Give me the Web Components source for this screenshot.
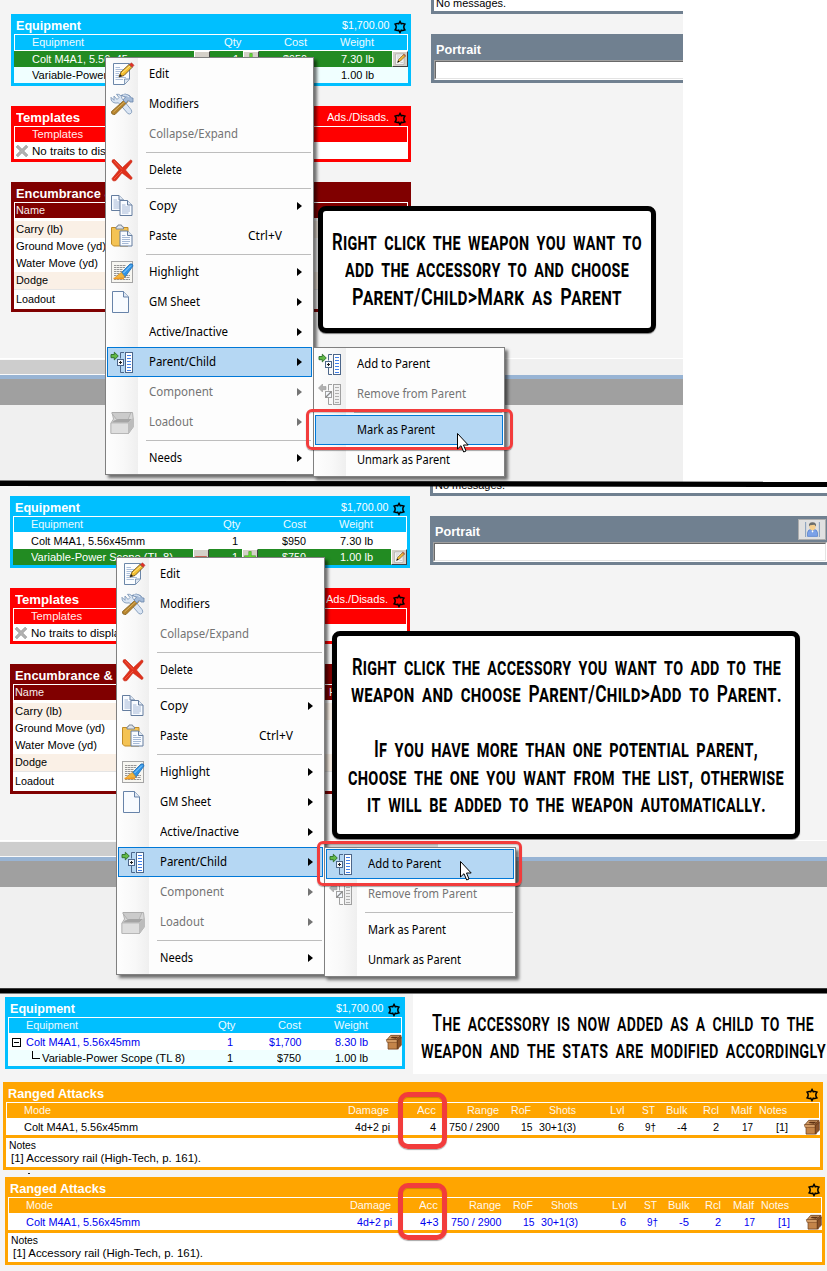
<!DOCTYPE html>
<html lang="en">
<head>
<meta charset="utf-8">
<title>Adding accessories to weapons</title>
<style>
html,body{margin:0;padding:0}
body{width:827px;height:1271px;position:relative;overflow:hidden;background:#fff;font:11px/16px "Liberation Sans",Arial,sans-serif;color:#000}
</style>
</head>
<body>
<guide-page></guide-page>

<script>
const PAGE='<path d="M3.5 1.5H19.5V17L14.500 22.500H3.5Z" fill="#fbfdff" stroke="#6b86a8"/><path d="M14.500 22V17H19" fill="#dfe8f2" stroke="#6b86a8" stroke-width=".8"/>';
const DOC='<path d="M.5.5H8L12.500 5V15.500H.5Z" fill="#f8fbff" stroke="#647d9f"/><path d="M8 .5V5H12.500" fill="#e1e9f4" stroke="#647d9f"/><path d="M2.500 5H6M2.500 7H10.500M2.500 9H10.500M2.500 11H10.500M2.500 13H9" stroke="#8fa8cc" stroke-width=".8"/>';
const LINK=(off)=>{const n=off?'#a0a0a0':'#4c668a',l=off?'#b0b0b0':'#3f80ec';
return `<path d="M14 2.500H10.500V8.500M10.500 16V22.500H14" fill="none" stroke="${n}"/><rect x="15.500" y="2.500" width="7" height="20" fill="${off?'#f0f0f0':'#fff'}" stroke="${n}"/><path d="M17 5.500H21M17 8.500H21M17 11.500H21M17 14.500H21M17 17.500H21M17 20.500H21" stroke="${l}"/><rect x="7.500" y="9.500" width="6" height="6" fill="#f4f8fd" stroke="${n}"/>`+
(off?'<path d="M7.500 15.500 13.500 9.500" stroke="#888" stroke-width="1.200"/><path d="M.5 6 4.500 2V4.500H8V7.700H4.500V10Z" fill="#b0b0b0" stroke="#999" stroke-width=".6"/>':'<path d="M10.500 11V14M9 12.500H12" stroke="#222"/><path d="M8.300 6 4.300 2.200V4.500H1V7.700H4.300V9.900Z" fill="#62ba45" stroke="#2a6c28" stroke-width=".9"/>')};
const ICONS={
edit:PAGE+'<path d="M5.500 5.500H10M5.500 7.500H13M5.500 9.500H11M5.500 11.500H9M5.500 13.500H9M5.500 15.500H16M5.500 17.500H13" stroke="#a3b8d6" stroke-width=".9"/><path d="M9 15 11 10 19 2.500 22 5.500 14 13.500Z" fill="#f4bf31" stroke="#6d5420" stroke-width=".9"/><path d="M9 15 10 12 12 14Z" fill="#222"/><path d="M12 11 20 4" stroke="#ffe68a"/><path d="M19.500 2.500 21.500.8 24 3.300 22.300 5.300Z" fill="#e33127" stroke="#9b2a20" stroke-width=".5"/>',
tools:'<path d="M4 4 7 7.500 9 5.500 6.500 2.300Q11 1.800 12 6.500L21 17.500Q23 21 19.500 22Q17.500 22 16.500 20L8.500 10.800Q3 12 1.200 8L1 5.300 4 8.300Z" fill="#dbe6f4" stroke="#7f98b8" stroke-width=".9"/><path d="M1.500 19.500 15.500 7 18 9.500 5 22.500Q1 23 1.500 19.500Z" fill="#b6832c" stroke="#80601f" stroke-width=".8"/><path d="M3.500 20 15.500 9" stroke="#dbb363"/><path d="M11 3.500Q15 .5 19.500 3.500L21.500 6 23 6 23 10 20 10 18.500 8 16 11 13 8 15.500 5Z" fill="#a5bbd8" stroke="#6b86ab" stroke-width=".8"/><path d="M13 3Q17 2.500 19 5" stroke="#e7f0fb" fill="none"/>',
del:'<path d="M2 4Q1.500 1 4.500 1.500L12.500 9.500 20.500 2Q22.500 2 22 4L15.500 12 22 19.500Q22.500 21.500 20.500 21.500L12 15 6 22.500Q2 24 2 20.500L9 12Z" fill="#e0301b" stroke="#c42b19" stroke-width=".6"/><path d="M4 3 12 11.500M4 21 12 13" stroke="#ee5a44" fill="none"/>',
copy:`<g transform="translate(1 1)">${DOC}</g><g transform="translate(9.500 6)">${DOC}</g>`,
paste:`<path d="M1.500 3.500H18V22H3.500L1.500 20Z" fill="#f4c354" stroke="#c08b27"/><path d="M6 5V3Q8 3 8 1H11.500Q11.500 3 13.500 3V5Z" fill="#dfe4ea" stroke="#7d8897"/><g transform="translate(9.500 6.500)">${DOC}</g>`,
highlight:'<rect x="1.500" y="1.500" width="21" height="21" fill="#f7f6f1" stroke="#a5a5a5"/><path d="M4 5.500H16M4 7.500H15M4 9.500H13M4 11.500H12M4 13.500H9M4 15.500H8M16 15.500H20M14 17.500H20M4 19.500H20" stroke="#8a8a8a" stroke-width=".9" stroke-dasharray="2.500 .5"/><path d="M12 12 20 4Q23 3 23 6L15 17 11 16Z" fill="#3195e7" stroke="#246db0" stroke-width=".8"/><path d="M13.500 13 21 5.500" stroke="#9bd4ff"/><path d="M11.500 12.500 15 17 9 18.500 4 18.500 9 14Z" fill="#f5b53b" stroke="#b68231" stroke-width=".6"/><path d="M3.500 18.500H14" stroke="#f39a22" stroke-width="1.500"/>',
page:'<path d="M2.500 1.500H13.500L18.500 7V22.500H2.500Z" fill="#f8fbff" stroke="#6783a9"/><path d="M13.500 1.500V7H18.500" fill="#dfe8f3" stroke="#6783a9"/>',
link:LINK(false),unlink:LINK(true),
boxgray:'<path d="M1 13 3.500 9 2 2.500H12L22.500 2.500 23.300 9V17L18.500 23.500H1Z" fill="#d6d6d6" stroke="#a2a2a2" stroke-width=".8"/><path d="M2 2.500H21L18 9.500 6.500 9.500 2 3.500Z" fill="#cbcbcb" stroke="#a6a6a6" stroke-width=".7"/><path d="M4 10.500 9 9H22L18.500 12.500H2Z" fill="#a5a5a5"/><path d="M1 13H18.500V23.500H1Z" fill="#dedede" stroke="#b0b0b0" stroke-width=".7"/><path d="M18.500 13 23 8V17.500L18.500 23.500Z" fill="#bcbcbc"/>',
box:'<path d="M2 8 8 2H23L23.500 6 19 9V23H3V10.500Z" fill="#8a5228"/><path d="M1 9 7 2H22L16 8Z" fill="#d29a63" stroke="#5f3516" stroke-width="1"/><path d="M6.500 6 9 4H19L15 7Z" fill="#5d3113"/><path d="M3 10H17V22.500H3Z" fill="#c48449" stroke="#6b3d1b" stroke-width="1"/><path d="M17 10 23 5V17L17 22.500Z" fill="#8b5127" stroke="#5f3516" stroke-width="1"/><path d="M.5 8.500H16.500V12.500H1.500Z" fill="#dda46b" stroke="#6b3d1b" stroke-width=".8"/>',
gear:'<path d="M12 2.500 14.200 6.500Q17 5.500 20.500 7 18.500 9.500 18.500 12 18.500 14.500 20.500 17 17 18.500 14.200 17.500L12 21.500 9.800 17.500Q7 18.500 3.500 17 5.500 14.500 5.500 12 5.500 9.500 3.500 7 7 5.500 9.800 6.500Z" fill="none" stroke="#000" stroke-width="2.600"/>',
none:'<path d="M2 5 5 2 12 9 19 2 22 5 15 12 22 19 19 22 12 15 5 22 2 19 9 12Z" fill="#b2b2b2" stroke="#858585"/>',
pencil:'<path d="M3 2H20V23H3Z" fill="#f2f2f2" stroke="#999"/><path d="M6 6H13M6 10H10M13 19H18" stroke="#aaa"/><path d="M7 19 9 13 19 3 23 6 13 16Z" fill="#edb334" stroke="#473c22"/><path d="M7 19 8.500 15 11 17.500Z"/><path d="M18 4 20 1 24 5 22 7Z" fill="#b46b4b"/>',
minus:'<path d="M1 11H23V16H1Z" fill="#f36c55" stroke="#a8281c"/>',
plus:'<path d="M9.500 1H14.500V9.500H23V14.500H14.500V22H9.500V14.500H1V9.500H9.500Z" fill="#65dd32" stroke="#2d8f15"/>',
user:'<path d="M1 0V24M23 0V24" stroke="#7e99ba" stroke-width="1.500"/><path d="M4 23V17Q5 12 9 12L12 15 15 12Q19 12 20 17V23Z" fill="#7ca2e8" stroke="#4773c4"/><circle cx="12" cy="8" r="5" fill="#f6cf8d"/><path d="M6.500 7Q5 1 12 .500Q19 1 17.500 7L15 4.500 8 5Z" fill="#6b6d6b"/><path d="M10 14H14L12 17Z" fill="#fff"/>'
};
function define(name,css,html,after){
  customElements.define(name,class extends HTMLElement{
    connectedCallback(){
      if(this.shadowRoot)return;
      const r=this.attachShadow({mode:'open'});
      const t=document.createElement('template');
      t.innerHTML=`<style>*{box-sizing:border-box}${css}</style>${typeof html==='function'?html(this):html}`;
      r.append(t.content.cloneNode(true));
      if(after)after(this,r);
    }
  });
}
const at=(e,n,d='')=>e.getAttribute(n)??d;

/* Text condensed or expanded to a set width */
define('fit-text',':host{display:inline-block;white-space:pre;text-align:left}span{display:inline-block;transform-origin:0 50%}','<span><slot></slot></span>',(e,r)=>{
  const s=r.querySelector('span'),w=+at(e,'w',0);
  if(!w)return;
  s.style.transform=`scaleX(${w/s.getBoundingClientRect().width})`;
  e.style.width=w+'px';
});
const T=(t,w)=>`<fit-text w="${w}">${t}</fit-text>`;

define('ui-icon',':host{display:block;flex:none}svg{display:block;width:100%;height:100%;overflow:visible}',e=>`<svg viewBox="0 0 24 24">${ICONS[at(e,'name')]}</svg>`);
define('tiny-button',':host{display:block;flex:none;width:16px;height:16px;background:#d4d0c8;border:1px solid;border-color:#fff #404040 #404040 #fff;padding:1px}ui-icon{width:12px;height:12px}',e=>`<ui-icon name="${at(e,'name')}"></ui-icon>`);

/* Coloured panel with title bar, white frame and slotted rows */
define('sheet-panel',`:host{display:block;background:var(--c);padding:3px}
.t{height:17px;display:flex;align-items:center;color:#fff;font-size:12px;font-weight:bold;padding:0 1px 0 2px}
.x{margin-left:auto;margin-right:4px;font-size:11px;font-weight:normal;padding-bottom:2px}
ui-icon{width:14px;height:14px;position:relative;top:1px}.b{background:#fff}`,
e=>`<div class="t">${T(at(e,'title-text'),at(e,'tw'))}<span class="x">${at(e,'total')?T(at(e,'total'),at(e,'totalw')):''}</span>${at(e,'gear')==='no'?'':'<ui-icon name="gear"></ui-icon>'}</div><div class="b"><slot></slot></div>`);

/* One table line, columns passed as a grid template */
define('sheet-row',`:host{display:grid;height:16px;line-height:16px;align-items:center;text-align:right}
:host([head]){background:var(--c);border:1px solid #fff;border-bottom:0;color:#fff;line-height:15px;margin-bottom:1px}
:host([head]) ::slotted(*){opacity:.93}`,'<slot></slot>',(e)=>{e.style.gridTemplateColumns=at(e,'cols')});

const EQ='160px 67px 66px 67px 1fr', EQH='159px 67px 66px 67px 1fr';
define('equipment-panel',`:host{display:block;width:400px;--c:#00bfff}
.n{text-align:left;padding-left:18px;white-space:nowrap}.hn{padding-left:17px}.v{padding-right:2px}
.sel{background:#228b22;color:#fff}.alt{background:#f0ffff}
.q{display:flex;justify-content:space-between;padding-left:20px;padding-right:2px}.co{display:flex;justify-content:space-between;padding-left:2px}
.blue{color:#0000f0}.tree{display:flex;padding-left:18px;text-align:left}.root{display:flex;text-align:left}
.mb{flex:none;width:9px;height:9px;border:1px solid #000;margin:4px 5px 0 4px;position:relative}.mb:after{content:"";position:absolute;left:1px;right:1px;top:3px;height:1px;background:#000}
.elb{flex:none;width:8px;height:8px;border-left:1px solid #000;border-bottom:1px solid #000;margin:1px 2px 0 6px}
fit-text{flex:none}.act{justify-self:end}`,
e=>{
 const m=at(e,'mode');
 const row=(name,w,cost,cw,wt,sel,alt)=>`<sheet-row cols="${EQ}" class="${sel?'sel':alt?'alt':''}"><span class="n">${T(name,w)}</span>${sel?`<span class="q"><tiny-button name="minus"></tiny-button><span>1</span></span><span class="co"><tiny-button name="plus"></tiny-button>${T(cost,cw)}</span>`:`<span class="v">1</span><span>${T(cost,cw)}</span>`}<span>${T(wt,33)}</span>${sel?'<tiny-button class="act" name="pencil"></tiny-button>':'<span></span>'}</sheet-row>`;
 return `<sheet-panel title-text="Equipment" tw="65" total="$1,700.00" totalw="47.5"><sheet-row head cols="${EQH}"><span class="n hn">${T('Equipment',52)}</span><span>${T('Qty',17.5)}</span><span>${T('Cost',23)}</span><span>${T('Weight',34)}</span></sheet-row>`+
 (m==='tree'?`<sheet-row cols="${EQ}" class="blue"><span class="root"><i class="mb"></i>${T('Colt M4A1, 5.56x45mm',114)}</span><span class="v">1</span><span>${T('$1,700',32.5)}</span><span>${T('8.30 lb',33)}</span><ui-icon name="box" class="act" style="width:16px;height:16px"></ui-icon></sheet-row><sheet-row cols="${EQ}" class="alt"><span class="tree"><i class="elb"></i>${T('Variable-Power Scope (TL 8)',143)}</span><span class="v">1</span><span>${T('$750',24)}</span><span>${T('1.00 lb',33)}</span></sheet-row>`
 :row('Colt M4A1, 5.56x45mm',114,'$950',24,'7.30 lb',m==='first',false)+row('Variable-Power Scope (TL 8)',142,'$750',24,'1.00 lb',m==='second',true))+'</sheet-panel>';
});

define('char-sheet',`:host{display:block;overflow:hidden;background:#f4f4f4}
.cols{display:flex;gap:20px;height:358px;overflow:hidden}
.l{width:400px;flex:none;display:flex;flex-direction:column;gap:20px;padding-top:14px}
.r{width:400px;flex:none;display:flex;flex-direction:column;gap:20px}
.msg{height:14px;background:#708090;padding:0 3px 3px}.msg div{background:#fff;height:11px;padding-left:2px;line-height:6px}
.por{background:#708090;height:49px;padding:3px;display:flex;flex-direction:column}
.pt{height:23px;display:flex;justify-content:space-between;align-items:center;color:#fff;font-weight:bold;font-size:12px;padding:0 1px 0 2px}
.pt fit-text{position:relative;top:1px}
.pb{width:28px;height:21px;margin:0 0 2px;background:#e1e1e1;border:1px solid #adadad;padding:2px 4px;display:flex}.pb ui-icon{width:19px;height:15px}
.in{height:20px;border:1px solid;border-color:#a0a0a0 #fff #fff #a0a0a0;background:#fff}.in div{height:18px;border:1px solid;border-color:#696969 #e3e3e3 #e3e3e3 #696969}
.red{--c:#f00}.mar{--c:#800000}
.none{display:flex;align-items:center;height:16px;gap:3px;padding-left:1px}.none ui-icon{width:14px;height:14px}
.enc{display:flex;flex-direction:column;padding-top:2px}.enc div{height:17px;line-height:17px;padding-left:2px}.enc .a{background:#faf0e6}.enc .lo{height:20px;line-height:19px;border:1px solid #e5e5e5;border-left:0;border-bottom:0;padding-left:2px}
.hd{text-align:left;padding-left:1px}.hx{text-align:left}
.s1{height:17px;background:#f0f0f0;border-top:1px solid #fff}.s1 div{width:438px;height:16px;background:#cdcdcd;border:solid #fafafa;border-width:1px 0}
.s2{height:4px;background:#98b4d4}.s3{height:26px;background:#a0a0a0}.s4{height:120px;background:#f0f0f0}`,
e=>`<div class="cols" style="padding-left:${at(e,'x')}px"><div class="l">
<equipment-panel mode="${at(e,'sel')}"></equipment-panel>
<sheet-panel class="red" title-text="Templates" tw="64" total="Ads./Disads." totalw="62"><sheet-row head cols="1fr"><span class="hd" style="padding-left:17px">${T('Templates',51)}</span></sheet-row><div class="none"><ui-icon name="none"></ui-icon>${T('No traits to display',95)}</div></sheet-panel>
<sheet-panel class="mar" title-text="Encumbrance &amp; Move" tw="134" gear="no"><sheet-row head cols="315px 1fr"><span class="hd">${T('Name',29)}</span><span class="hx">H</span></sheet-row><div class="enc"><div class="a">${T('Carry (lb)',47)}</div><div>${T('Ground Move (yd)',90)}</div><div>${T('Water Move (yd)',82)}</div><div class="a">${T('Dodge',32)}</div><div class="lo">${T('Loadout',39)}</div></div></sheet-panel>
</div><div class="r"><div class="msg"><div>${T('No messages.',70)}</div></div>
<div class="por"><div class="pt">${T('Portrait',45)}<span class="pb"><ui-icon name="user"></ui-icon></span></div><div class="in"><div></div></div></div></div></div>
<div class="s1"><div></div></div><div class="s2"></div><div class="s3"></div><div class="s4"></div>`);

const RC='1fr 46px 63px 32px 45px 48px 31px 32px 32px 33px 35px 33px';
define('attack-panel',`:host{display:block;width:820px;--c:#ffa500}
.m{display:grid;grid-template-columns:auto auto;justify-content:space-between;padding-left:18px;text-align:left}
.hm{padding-left:17px}.blue{color:#0000f0}.sep{height:3px;background:var(--c)}
.notes{height:29px;padding:1px 3px;line-height:13px}.notes div+div{padding-left:2px}
ui-icon{width:16px;height:16px;justify-self:end}`,
e=>{const c=(t,w,p=0)=>`<span style="margin-right:${-p}px">${T(t,w)}</span>`;
return `<sheet-panel title-text="Ranged Attacks" tw="96"><sheet-row head cols="${RC}"><span class="m hm">${T('Mode',27)}${T('Damage',41)}</span>${c('Acc',19,1)}${c('Range',32,1)}${c('RoF',20,1)}${c('Shots',27,1)}${c('Lvl',14.5,1)}${c('ST',13,1)}${c('Bulk',21.5,1)}${c('Rcl',16,1)}${c('Malf',21,1)}${c('Notes',28,1)}<span></span></sheet-row>
<sheet-row cols="${RC}" class="${at(e,'tone')}"><span class="m">${T('Colt M4A1, 5.56x45mm',114)}${T('4d+2 pi',35)}</span>${at(e,'acc')==='4'?'<span>4</span>':c(at(e,'acc'),18.5)}${c('750 / 2900',50.5)}${c('15',11.5,1)}${c('30+1(3)',37)}<span>6</span>${c('9†',11,1)}${c(at(e,'bulk'),10)}<span>2</span>${c('17',11,1)}${c('[1]',12,1)}<ui-icon name="box"></ui-icon></sheet-row>
<div class="sep"></div><div class="notes"><div>${T('Notes',27)}</div><div>${T('[1] Accessory rail (High-Tech, p. 161).',190)}</div></div></sheet-panel>`});

/* Context menu and its parts */
define('menu-item',`:host{display:flex;align-items:center;height:30px;border:1px solid transparent;font:12px/16px "Noto Sans","Open Sans",sans-serif;padding-left:2px}
:host([on]){background:#b5d7f3;border-color:#0078d7}:host([off]){color:#747474}
ui-icon,.g{width:24px;height:24px;flex:none}.l{margin-left:15px;width:99px;flex:none;white-space:nowrap}
.a{margin:0 9px 0 auto;border:4px solid transparent;border-left:5px solid;border-right:0}`,
e=>`${at(e,'icon')?`<ui-icon name="${at(e,'icon')}"></ui-icon>`:'<span class="g"></span>'}<span class="l">${T(at(e,'label'),at(e,'w'))}</span>${at(e,'key')?T(at(e,'key'),34):''}${e.hasAttribute('sub')?'<i class="a"></i>':''}`);
define('menu-sep',':host{display:block;height:6px;padding:3px 1px 0 39px}div{height:1px;background:#bdbdbd}','<div></div>');
define('menu-box',`:host{display:block;border:1px solid #808080;padding:1px;box-shadow:3px 3px 3px rgba(0,0,0,.55);background:linear-gradient(90deg,#fdfdfd 2px,#f8f8f8 18px,#efefef 32px,#fdfdfd 32px)}`,'<slot></slot>');
define('context-menu',':host{display:block;width:209px}',`<menu-box>
<menu-item icon="edit" label="Edit" w="20"></menu-item><menu-item icon="tools" label="Modifiers" w="50"></menu-item><menu-item label="Collapse/Expand" w="89" off></menu-item><menu-sep></menu-sep>
<menu-item icon="del" label="Delete" w="33"></menu-item><menu-sep></menu-sep>
<menu-item icon="copy" label="Copy" w="28" sub></menu-item><menu-item icon="paste" label="Paste" w="28" key="Ctrl+V"></menu-item><menu-sep></menu-sep>
<menu-item icon="highlight" label="Highlight" w="50" sub></menu-item><menu-item icon="page" label="GM Sheet" w="51" sub></menu-item><menu-item label="Active/Inactive" w="79" sub></menu-item><menu-item icon="link" label="Parent/Child" w="67" sub on></menu-item><menu-item label="Component" w="64" sub off></menu-item><menu-item icon="boxgray" label="Loadout" w="44" sub off></menu-item><menu-sep></menu-sep>
<menu-item label="Needs" w="33" sub></menu-item></menu-box>`);
define('parent-menu',':host{display:block;width:192px}',e=>{const p=at(e,'pick');return `<menu-box>
<menu-item icon="link" label="Add to Parent" w="73" ${p==='add'?'on':''}></menu-item><menu-item icon="unlink" label="Remove from Parent" w="109" off></menu-item><menu-sep></menu-sep>
<menu-item label="Mark as Parent" w="78" ${p==='mark'?'on':''}></menu-item><menu-item label="Unmark as Parent" w="93"></menu-item></menu-box>`});

define('call-out',`:host{display:block;background:#fff;border:5px solid #000;border-radius:8px;box-shadow:0 1px 1px rgba(0,0,0,.5);text-align:center;padding-top:17.5px;--wt:600}
:host([plain]){border:0;border-radius:0;box-shadow:none;padding:15.500px 0 0 6px;--wt:500}
div{height:27.5px;font:var(--wt) 24px/27.5px Roboto,"Liberation Sans",sans-serif;font-variant:small-caps;letter-spacing:.4px;word-spacing:4px;white-space:nowrap}`,
e=>at(e,'lines').split('|').map(l=>{const[t,w]=l.split('~');return `<div>${w?T(t,w):''}</div>`}).join(''));
define('red-frame',':host{display:block;border:var(--b,3px) solid #f23c3c;border-radius:var(--r,6px);box-shadow:0 1px 1px rgba(0,0,0,.35),inset 0 1px 1px rgba(0,0,0,.2)}','');
define('mouse-cursor',':host{display:block;width:12px;height:20px}svg{display:block}','<svg width="12" height="20"><path d="M.5.5V16L4 12.700 6.700 19 9 18 6.500 12H11.200Z" fill="#fff" stroke="#000"/></svg>');

define('guide-page',`:host{display:block;width:827px;height:1271px;position:relative;overflow:hidden}
.one{width:683px;height:482px}.two{height:508px}
.res{height:281px;background:#f4f4f4;display:flex;flex-direction:column;padding-top:4px}
.top{display:flex;height:80px;justify-content:space-between}.top equipment-panel{margin:3px 0 0 5px}.top call-out{width:414px;height:80px;box-sizing:border-box}
.first{margin:8px 0 0 3px}.second{margin:7px 0 0 5px}
.o{position:absolute}.big{--b:5px;--r:10px}`,
`<char-sheet class="one" x="11" sel="first"></char-sheet>
<char-sheet class="two" x="10" sel="second"></char-sheet>
<div class="res"><div class="top"><equipment-panel mode="tree"></equipment-panel><call-out plain lines="The accessory is now added as a child to the~382|weapon and the stats are modified accordingly~405"></call-out></div>
<attack-panel class="first" acc="4" bulk="-4"></attack-panel><attack-panel class="second" acc="4+3" bulk="-5" tone="blue"></attack-panel></div>
<svg class="o" style="left:0;top:0" width="827" height="1271"><path d="M0 480.500 827 481.800V487L0 486Z"/><path d="M0 988.300H827V993.500H0Z"/><path d="M28 1173.500H30" stroke="#222"/></svg>
<context-menu class="o" style="left:105px;top:57px"></context-menu>
<call-out class="o" style="left:318px;top:206px;width:338px;height:127px" lines="Right click the weapon you want to~310|add the accessory to and choose~284|Parent/Child&gt;Mark as Parent~270"></call-out>
<parent-menu class="o" style="left:313px;top:347px" pick="mark"></parent-menu>
<red-frame class="o" style="left:306px;top:409px;width:207px;height:41px"></red-frame>
<mouse-cursor class="o" style="left:457px;top:433px"></mouse-cursor>
<context-menu class="o" style="left:116px;top:557px"></context-menu>
<call-out class="o" style="left:332px;top:631px;width:468px;height:208px" lines="Right click the accessory you want to add to the~429|weapon and choose Parent/Child&gt;Add to Parent.~431||If you have more than one potential parent,~384|choose the one you want from the list, otherwise~436|it will be added to the weapon automatically.~399"></call-out>
<parent-menu class="o" style="left:324px;top:847px" pick="add"></parent-menu>
<red-frame class="o" style="left:317px;top:841px;width:205px;height:45px"></red-frame>
<mouse-cursor class="o" style="left:460px;top:861px"></mouse-cursor>
<red-frame class="o big" style="left:398px;top:1092px;width:49px;height:57px"></red-frame>
<red-frame class="o big" style="left:398px;top:1183px;width:49px;height:57px"></red-frame>`);
</script>
</body>
</html>
